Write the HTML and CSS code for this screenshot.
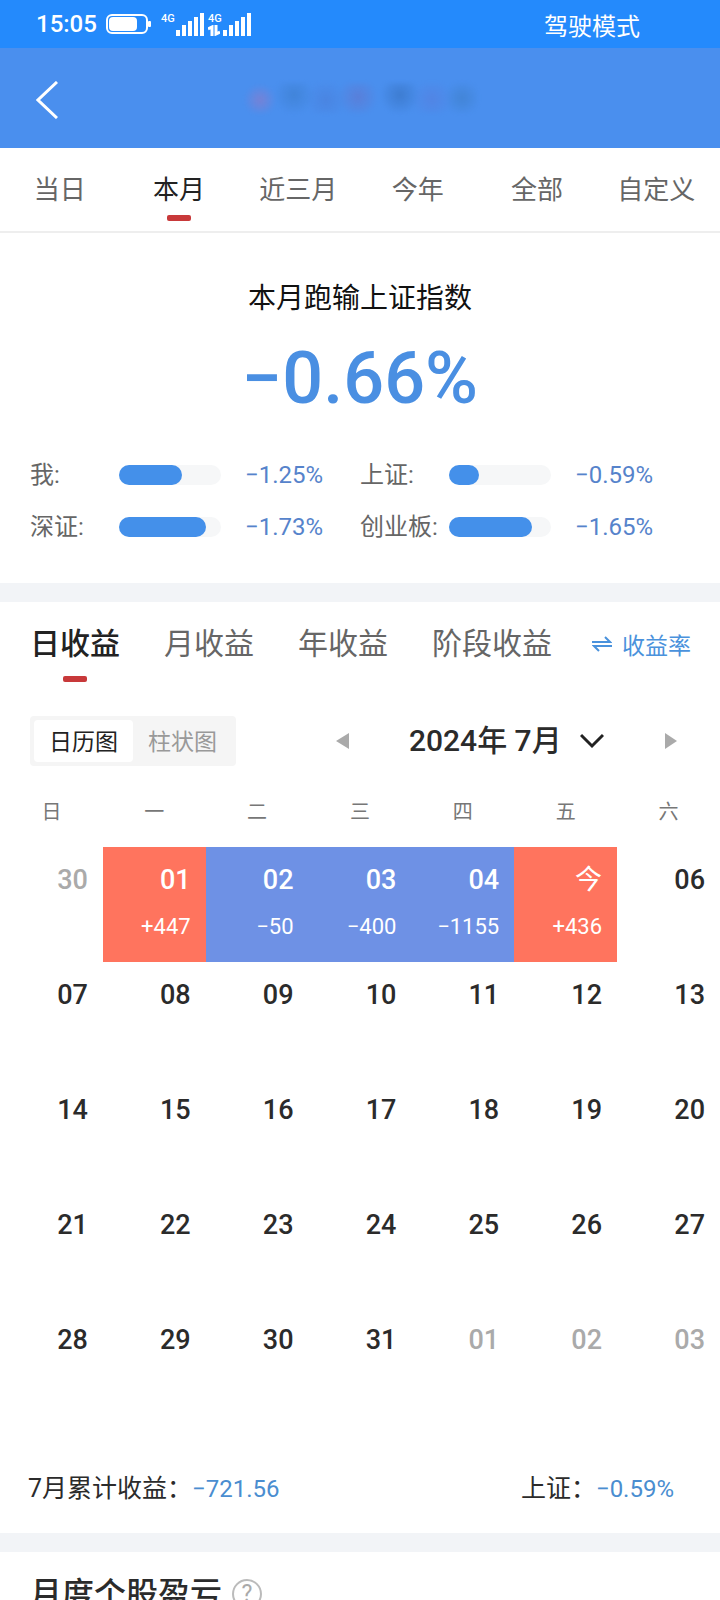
FILE: index.html
```html
<!DOCTYPE html>
<html lang="zh-CN">
<head>
  <meta charset="UTF-8" />
  <meta name="viewport" content="width=device-width, initial-scale=1.0" />
  <title>收益日历</title>
  <link rel="stylesheet" href="styles.css">
</head>
<body>
  <div class="status-bar">
    <span class="clock">15:05</span>
    <svg class="battery" width="45" height="20" viewBox="0 0 45 20">
      <rect x="1" y="1" width="40" height="18" rx="5" fill="none" stroke="#fff" stroke-width="2" />
      <rect x="3" y="3" width="28" height="14" rx="4" fill="#fff" />
      <rect x="42" y="7" width="3" height="6" rx="1" fill="#fff" />
    </svg>
    <div class="signal">
      <span class="network">4G</span>
      <svg width="28" height="23" viewBox="0 0 28 23" fill="#fff">
        <rect x="0" y="17" width="4" height="6" /><rect x="6" y="12" width="4" height="11" />
        <rect x="12" y="8" width="4" height="15" /><rect x="18" y="4" width="4" height="19" />
        <rect x="24" y="0" width="4" height="23" />
      </svg>
    </div>
    <div class="signal">
      <span class="network">4G
        <svg width="12" height="11" viewBox="0 0 12 11" fill="none" stroke="#fff" stroke-width="3">
          <path d="M0 4L4 2V11M12 7L8 9V0" />
        </svg>
      </span>
      <svg width="28" height="23" viewBox="0 0 28 23" fill="#fff">
        <rect x="0" y="17" width="4" height="6" /><rect x="6" y="12" width="4" height="11" />
        <rect x="12" y="8" width="4" height="15" /><rect x="18" y="4" width="4" height="19" />
        <rect x="24" y="0" width="4" height="23" />
      </svg>
    </div>
    <span class="mode">驾驶模式</span>
  </div>

  <header class="nav-bar">
    <button class="back" aria-label="返回">
      <svg width="22" height="38" viewBox="0 0 22 38" fill="none" stroke="#fff" stroke-width="3">
        <path d="M21 1L2 19L21 37" />
      </svg>
    </button>
    <div class="masked-name"></div>
  </header>

  <main>
    <nav class="range-tabs">
      <button>当日</button>
      <button class="active">本月</button>
      <button>近三月</button>
      <button>今年</button>
      <button>全部</button>
      <button>自定义</button>
    </nav>

    <section class="summary">
      <h1>本月跑输上证指数</h1>
      <p class="total">−0.66%</p>
      <div class="compare">
        <div class="compare-item">
          <span class="name">我:</span>
          <div class="bar"><div class="fill" style="width: 62%"></div></div>
          <span class="rate">−1.25%</span>
        </div>
        <div class="compare-item">
          <span class="name">上证:</span>
          <div class="bar"><div class="fill" style="width: 29%"></div></div>
          <span class="rate">−0.59%</span>
        </div>
        <div class="compare-item">
          <span class="name">深证:</span>
          <div class="bar"><div class="fill" style="width: 85%"></div></div>
          <span class="rate">−1.73%</span>
        </div>
        <div class="compare-item">
          <span class="name">创业板:</span>
          <div class="bar"><div class="fill" style="width: 81%"></div></div>
          <span class="rate">−1.65%</span>
        </div>
      </div>
    </section>

    <section class="profit">
      <div class="profit-head">
        <div class="profit-tabs">
          <button class="active">日收益</button>
          <button>月收益</button>
          <button>年收益</button>
          <button>阶段收益</button>
        </div>
        <button class="switch">
          <svg width="20" height="16" viewBox="0 0 20 16" fill="none" stroke="#4a92dc" stroke-width="2">
            <path d="M0 6H18L13 1M20 10H2L7 15" />
          </svg>
          收益率
        </button>
      </div>

      <div class="toolbar">
        <div class="view-switch">
          <button class="active">日历图</button>
          <button>柱状图</button>
        </div>
        <div class="month-nav">
          <button aria-label="上个月">
            <svg width="14" height="18" viewBox="0 0 14 18"><path d="M14 1V17L1 9Z" fill="#aaa" /></svg>
          </button>
          <button class="month">
            2024年 7月
            <svg width="24" height="16" viewBox="0 0 24 16" fill="none" stroke="#222" stroke-width="3">
              <path d="M1 2L12 13L23 2" />
            </svg>
          </button>
          <button aria-label="下个月">
            <svg width="14" height="18" viewBox="0 0 14 18"><path d="M1 1V17L13 9Z" fill="#aaa" /></svg>
          </button>
        </div>
      </div>

      <table class="calendar">
        <thead>
          <tr><th>日</th><th>一</th><th>二</th><th>三</th><th>四</th><th>五</th><th>六</th></tr>
        </thead>
        <tbody>
          <tr>
            <td class="other">30</td>
            <td class="up">01<span>+447</span></td>
            <td class="down">02<span>−50</span></td>
            <td class="down">03<span>−400</span></td>
            <td class="down">04<span>−1155</span></td>
            <td class="up today">今<span>+436</span></td>
            <td>06</td>
          </tr>
          <tr><td>07</td><td>08</td><td>09</td><td>10</td><td>11</td><td>12</td><td>13</td></tr>
          <tr><td>14</td><td>15</td><td>16</td><td>17</td><td>18</td><td>19</td><td>20</td></tr>
          <tr><td>21</td><td>22</td><td>23</td><td>24</td><td>25</td><td>26</td><td>27</td></tr>
          <tr>
            <td>28</td><td>29</td><td>30</td><td>31</td>
            <td class="other">01</td><td class="other">02</td><td class="other">03</td>
          </tr>
        </tbody>
      </table>

      <div class="month-total">
        <span>7月累计收益：<b>−721.56</b></span>
        <span>上证：<b>−0.59%</b></span>
      </div>
    </section>

    <section class="stocks">
      <h2>月度个股盈亏</h2>
      <button class="help" aria-label="说明">?</button>
    </section>
  </main>
</body>
</html>
```

FILE: styles.css
```css
* {
  box-sizing: border-box;
}
body {
  margin: 0;
  height: 100vh;
  display: flex;
  flex-direction: column;
  overflow: hidden;
  font-family: Roboto, "Noto Sans CJK SC", sans-serif;
  background-color: #fff;
  color: #2b2b2b;
}
button {
  padding: 0;
  border: none;
  background: none;
  font-family: inherit;
  color: inherit;
  white-space: nowrap;
  cursor: pointer;
}
svg {
  display: block;
}

/* top bars */
.status-bar {
  display: flex;
  flex-shrink: 0;
  align-items: center;
  height: 48px;
  padding: 0 80px 0 36px;
  background-color: #248afc;
  color: #fff;
  font-size: 24px;
}
.clock {
  font-weight: 500;
}
.battery {
  margin: 0 10px 0 9px;
}
.signal {
  display: flex;
  gap: 1px;
  margin-right: 4px;
}
.network {
  width: 14px;
  font-size: 11px;
  font-weight: 500;
  line-height: 12px;
}
.mode {
  margin-left: auto;
}
.nav-bar {
  display: flex;
  flex-shrink: 0;
  align-items: center;
  justify-content: center;
  position: relative;
  height: 100px;
  background-color: #4a8fee;
}
.back {
  position: absolute;
  left: 36px;
  top: 33px;
}
.masked-name {
  width: 236px;
  height: 30px;
  background:
    radial-gradient(circle at 18px 17px, #8a7ccc 0, transparent 16px),
    radial-gradient(circle at 52px 12px, #3d7fd0 0, transparent 20px),
    radial-gradient(circle at 84px 17px, #4a80dc 0, transparent 20px),
    radial-gradient(circle at 116px 14px, #6078d0 0, transparent 20px),
    radial-gradient(circle at 158px 12px, #3874c4 0, transparent 20px),
    radial-gradient(circle at 190px 16px, #5580e0 0, transparent 20px),
    radial-gradient(circle at 220px 15px, #3f80cc 0, transparent 18px);
  filter: blur(2px);
  opacity: 0.7;
}

main {
  flex: 1;
  overflow-y: auto;
  scrollbar-width: none;
}

/* range tabs */
.range-tabs {
  display: grid;
  grid-template-columns: repeat(6, 1fr);
  height: 85px;
  padding-right: 4px;
  border-bottom: 2px solid #eee;
}
.range-tabs button {
  position: relative;
  font-size: 26px;
  line-height: 32px;
  color: #666;
}
.range-tabs .active {
  color: #222;
}
.range-tabs .active::after,
.profit-tabs .active::after {
  content: "";
  position: absolute;
  left: 50%;
  bottom: 10px;
  width: 24px;
  height: 6px;
  margin-left: -12px;
  border-radius: 2px;
  background-color: #c8393a;
}

/* summary */
.summary {
  padding: 46px 30px 40px;
}
.summary h1 {
  margin: 0;
  font-size: 28px;
  font-weight: 400;
  line-height: 40px;
  text-align: center;
  color: #111;
}
.total {
  margin: 20px 0 40px;
  font-size: 72px;
  font-weight: 500;
  line-height: 80px;
  text-align: center;
  color: #4a8fe2;
}
.compare {
  display: grid;
  grid-template-columns: 1fr 1fr;
  row-gap: 20px;
}
.compare-item {
  display: flex;
  align-items: center;
  line-height: 32px;
  font-size: 24px;
}
.name {
  width: 89px;
  color: #666;
}
.bar {
  width: 102px;
  height: 20px;
  margin-right: 24px;
  border-radius: 10px;
  background-color: #f6f7f8;
}
.fill {
  height: 100%;
  border-radius: 10px;
  background-color: #4490ea;
}
.rate {
  color: #5683cb;
}

/* profit */
.profit {
  border-top: 19px solid #f2f4f7;
  border-bottom: 19px solid #f2f4f7;
}
.profit-head {
  display: flex;
  justify-content: space-between;
  height: 84px;
  padding: 0 29px 0 30px;
}
.profit-tabs {
  display: flex;
  gap: 44px;
}
.profit-tabs button {
  position: relative;
  font-size: 30px;
  line-height: 40px;
  color: #666;
}
.profit-tabs .active {
  font-weight: 500;
  color: #222;
}
.profit-tabs .active::after {
  bottom: 4px;
}
.switch {
  display: flex;
  align-items: center;
  gap: 10px;
  font-size: 23px;
  color: #4a92dc;
}
.toolbar {
  display: flex;
  align-items: center;
  justify-content: space-between;
  margin-top: 30px;
  padding: 0 42px 0 30px;
}
.view-switch {
  display: flex;
  padding: 4px;
  border-radius: 4px;
  background-color: #f5f5f5;
}
.view-switch button {
  width: 99px;
  height: 42px;
  padding-bottom: 2px;
  font-size: 23px;
  color: #999;
}
.view-switch .active {
  border-radius: 4px;
  background-color: #fff;
  color: #222;
}
.month-nav {
  display: flex;
  align-items: center;
  justify-content: space-between;
  width: 53%;
}
.month {
  display: flex;
  align-items: center;
  gap: 18px;
  font-size: 30px;
  font-weight: 500;
  line-height: 40px;
}

/* calendar */
.calendar {
  width: 100%;
  margin-top: 8px;
  table-layout: fixed;
  border-collapse: collapse;
}
.calendar th {
  height: 73px;
  padding: 0;
  font-size: 20px;
  font-weight: 400;
  color: #777;
}
.calendar td {
  height: 115px;
  padding: 17px 15px 0 0;
  vertical-align: top;
  text-align: right;
  font-size: 27px;
  font-weight: 500;
  line-height: 32px;
}
.calendar span {
  display: block;
  margin-top: 15px;
  font-size: 22px;
  font-weight: 400;
}
.calendar .other {
  color: #aaa;
}
.calendar .up {
  background-color: #ff745e;
  color: #fff;
}
.calendar .down {
  background-color: #6e91e5;
  color: #fff;
}
.calendar .today {
  font-weight: 400;
}
.month-total {
  display: flex;
  justify-content: space-between;
  padding: 47px 46px 24px 28px;
  font-size: 25px;
  line-height: 40px;
}
.month-total b {
  font-size: 24px;
  font-weight: 400;
  color: #4a8dd0;
}

/* stocks */
.stocks {
  display: flex;
  align-items: center;
  gap: 10px;
  padding: 18px 30px;
}
.stocks h2 {
  margin: 0;
  font-size: 32px;
  font-weight: 500;
  line-height: 48px;
}
.help {
  width: 30px;
  height: 30px;
  border: 2px solid #bbb;
  border-radius: 50%;
  font-size: 23px;
  line-height: 24px;
  color: #aaa;
}
```
